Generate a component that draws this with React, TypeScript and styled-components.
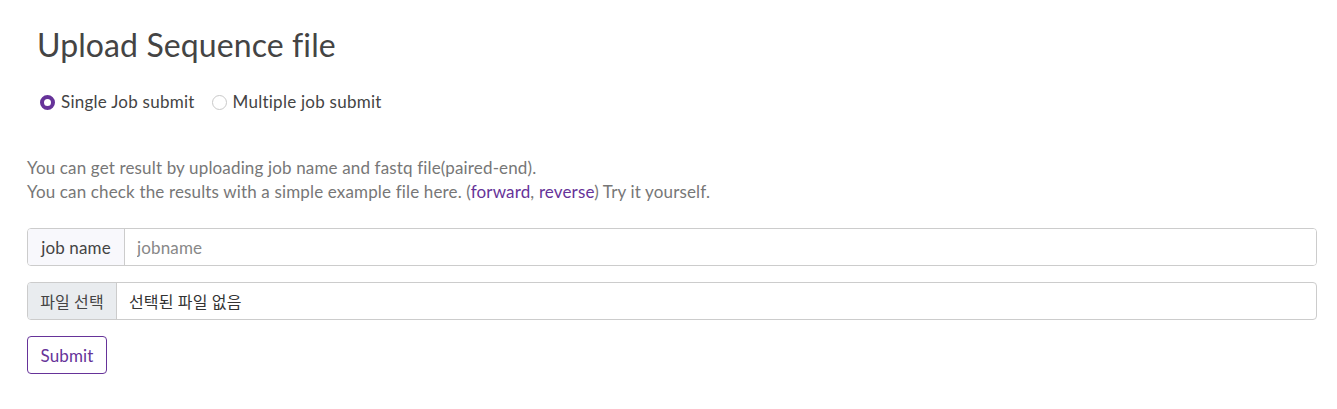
import React from "react";
import styled, { createGlobalStyle } from "styled-components";

const Global = createGlobalStyle`
	body {
		margin: 0;
		background: #fff;
		font-family: Lato, "Noto Sans CJK KR", sans-serif;
		color: #444;
	}
`;

const App = () => {
	const [mode, setMode] = React.useState("single");
	const [job, setJob] = React.useState("");

	return (
		<Container>
			<Global />
			<Title>Upload Sequence file</Title>
			<RadioRow>
				<RadioLabel>
					<Radio
						type='radio'
						name='mode'
						checked={mode === "single"}
						onChange={() => setMode("single")}
					/>
					Single Job submit
				</RadioLabel>
				<RadioLabel>
					<Radio
						type='radio'
						name='mode'
						checked={mode === "multi"}
						onChange={() => setMode("multi")}
					/>
					Multiple job submit
				</RadioLabel>
			</RadioRow>
			<Desc>
				You can get result by uploading job name and fastq file(paired-end).
				<br />
				You can check the results with a simple example file here. (
				<Link href='#'>forward</Link>, <Link href='#'>reverse</Link>) Try it
				yourself.
			</Desc>
			<Group>
				<Addon bg='#f8f8fc' w={96} fs={17}>
					job name
				</Addon>
				<Field
					placeholder='jobname'
					value={job}
					onChange={(e) => setJob(e.target.value)}
				/>
			</Group>
			<Group>
				<Addon bg='#e9ecef' w={88} fs={16}>
					파일 선택
				</Addon>
				<FileText>선택된 파일 없음</FileText>
			</Group>
			<SubmitBtn>Submit</SubmitBtn>
		</Container>
	);
};

export default App;

const Container = styled.div`
	padding: 23px 20px 0 27px;
	display: flex;
	flex-direction: column;
	font-size: 17px;
	letter-spacing: 0.15px;
`;

const Title = styled.h1`
	margin: 0 0 0 10px;
	font-size: 32px;
	font-weight: 400;
	line-height: 44px;
	letter-spacing: 0.1px;
	color: #444;
`;

const RadioRow = styled.div`
	display: flex;
	gap: 17px;
	margin: 24px 0 0 13px;
`;

const RadioLabel = styled.label`
	display: flex;
	align-items: center;
	gap: 6px;
	color: #444;
	line-height: 22px;
	letter-spacing: 0.25px;
`;

const Radio = styled.input`
	appearance: none;
	width: 15px;
	height: 15px;
	margin: 0;
	border-radius: 50%;
	border: 1px solid #c9c9c9;
	background: #fff;

	&:checked {
		border: 4px solid #663399;
		background: #fff;
	}
`;

const Desc = styled.p`
	margin: 43px 0 24px;
	line-height: 24px;
	color: #777;
`;

const Link = styled.a`
	color: #663399;
	text-decoration: none;
`;

const Group = styled.div`
	display: flex;
	height: 38px;
	border: 1px solid #ccc;
	border-radius: 4px;
	overflow: hidden;
	margin-bottom: 16px;
	box-sizing: border-box;
`;

const Addon = styled.div<{ bg: string; w: number; fs: number }>`
	width: ${(p) => p.w}px;
	flex-shrink: 0;
	display: flex;
	align-items: center;
	justify-content: center;
	background: ${(p) => p.bg};
	border-right: 1px solid #ccc;
	font-size: ${(p) => p.fs}px;
	color: #444;
`;

const Field = styled.input`
	flex: 1;
	border: none;
	outline: none;
	padding: 0 12px;
	font-family: inherit;
	font-size: 17px;
	letter-spacing: 0.15px;
	color: #444;

	&::placeholder {
		color: #888;
	}
`;

const FileText = styled.div`
	flex: 1;
	display: flex;
	align-items: center;
	padding: 0 12px;
	font-size: 16px;
	color: #333;
`;

const SubmitBtn = styled.button`
	align-self: flex-start;
	width: 80px;
	height: 38px;
	border: 1px solid #663399;
	border-radius: 4px;
	background: #fff;
	color: #663399;
	font-family: inherit;
	font-size: 17px;
	letter-spacing: 0.15px;
`;
